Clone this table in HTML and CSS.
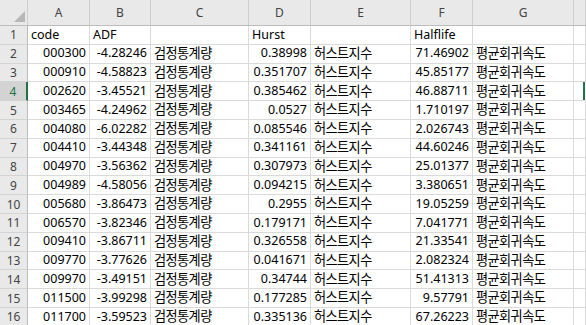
FILE: index.html
```html
<!DOCTYPE html>
<html lang="ko">
<head>
<meta charset="utf-8">
<title>Sheet1</title>
<link rel="stylesheet" href="styles.css">
</head>
<body>
<div class="sheet">
  <div class="row head">
    <div class="corner"><svg width="28" height="25" viewBox="0 0 28 25"><polygon points="14,22 25,22 25,11" fill="#b7b7b7"/></svg></div>
    <div class="col">A</div><div class="col">B</div><div class="col">C</div><div class="col">D</div><div class="col">E</div><div class="col">F</div><div class="col">G</div><div class="col"></div>
  </div>
  <div class="row"><div class="rh">1</div><div class="c">code</div><div class="c">ADF</div><div class="c"></div><div class="c">Hurst</div><div class="c"></div><div class="c">Halflife</div><div class="c"></div><div class="c"></div></div>
  <div class="row"><div class="rh">2</div><div class="c n">000300</div><div class="c n">-4.28246</div><div class="c">검정통계량</div><div class="c n">0.38998</div><div class="c">허스트지수</div><div class="c n">71.46902</div><div class="c">평균회귀속도</div><div class="c"></div></div>
  <div class="row"><div class="rh">3</div><div class="c n">000910</div><div class="c n">-4.58823</div><div class="c">검정통계량</div><div class="c n">0.351707</div><div class="c">허스트지수</div><div class="c n">45.85177</div><div class="c">평균회귀속도</div><div class="c"></div></div>
  <div class="row"><div class="rh sel">4</div><div class="c n">002620</div><div class="c n">-3.45521</div><div class="c">검정통계량</div><div class="c n">0.385462</div><div class="c">허스트지수</div><div class="c n">46.88711</div><div class="c">평균회귀속도</div><div class="c cur"><span class="mark"></span></div></div>
  <div class="row"><div class="rh">5</div><div class="c n">003465</div><div class="c n">-4.24962</div><div class="c">검정통계량</div><div class="c n">0.0527</div><div class="c">허스트지수</div><div class="c n">1.710197</div><div class="c">평균회귀속도</div><div class="c"></div></div>
  <div class="row"><div class="rh">6</div><div class="c n">004080</div><div class="c n">-6.02282</div><div class="c">검정통계량</div><div class="c n">0.085546</div><div class="c">허스트지수</div><div class="c n">2.026743</div><div class="c">평균회귀속도</div><div class="c"></div></div>
  <div class="row"><div class="rh">7</div><div class="c n">004410</div><div class="c n">-3.44348</div><div class="c">검정통계량</div><div class="c n">0.341161</div><div class="c">허스트지수</div><div class="c n">44.60246</div><div class="c">평균회귀속도</div><div class="c"></div></div>
  <div class="row"><div class="rh">8</div><div class="c n">004970</div><div class="c n">-3.56362</div><div class="c">검정통계량</div><div class="c n">0.307973</div><div class="c">허스트지수</div><div class="c n">25.01377</div><div class="c">평균회귀속도</div><div class="c"></div></div>
  <div class="row"><div class="rh">9</div><div class="c n">004989</div><div class="c n">-4.58056</div><div class="c">검정통계량</div><div class="c n">0.094215</div><div class="c">허스트지수</div><div class="c n">3.380651</div><div class="c">평균회귀속도</div><div class="c"></div></div>
  <div class="row"><div class="rh">10</div><div class="c n">005680</div><div class="c n">-3.86473</div><div class="c">검정통계량</div><div class="c n">0.2955</div><div class="c">허스트지수</div><div class="c n">19.05259</div><div class="c">평균회귀속도</div><div class="c"></div></div>
  <div class="row"><div class="rh">11</div><div class="c n">006570</div><div class="c n">-3.82346</div><div class="c">검정통계량</div><div class="c n">0.179171</div><div class="c">허스트지수</div><div class="c n">7.041771</div><div class="c">평균회귀속도</div><div class="c"></div></div>
  <div class="row"><div class="rh">12</div><div class="c n">009410</div><div class="c n">-3.86711</div><div class="c">검정통계량</div><div class="c n">0.326558</div><div class="c">허스트지수</div><div class="c n">21.33541</div><div class="c">평균회귀속도</div><div class="c"></div></div>
  <div class="row"><div class="rh">13</div><div class="c n">009770</div><div class="c n">-3.77626</div><div class="c">검정통계량</div><div class="c n">0.041671</div><div class="c">허스트지수</div><div class="c n">2.082324</div><div class="c">평균회귀속도</div><div class="c"></div></div>
  <div class="row"><div class="rh">14</div><div class="c n">009970</div><div class="c n">-3.49151</div><div class="c">검정통계량</div><div class="c n">0.34744</div><div class="c">허스트지수</div><div class="c n">51.41313</div><div class="c">평균회귀속도</div><div class="c"></div></div>
  <div class="row"><div class="rh">15</div><div class="c n">011500</div><div class="c n">-3.99298</div><div class="c">검정통계량</div><div class="c n">0.177285</div><div class="c">허스트지수</div><div class="c n">9.57791</div><div class="c">평균회귀속도</div><div class="c"></div></div>
  <div class="row"><div class="rh">16</div><div class="c n">011700</div><div class="c n">-3.59523</div><div class="c">검정통계량</div><div class="c n">0.335136</div><div class="c">허스트지수</div><div class="c n">67.26223</div><div class="c">평균회귀속도</div><div class="c"></div></div>
</div>
</body>
</html>
```
FILE: styles.css
```css
* { box-sizing: border-box; }

html, body {
  margin: 0;
  padding: 0;
  background: #ffffff;
  overflow: hidden;
}

.sheet {
  width: 586px;
  font-family: "Noto Sans", "Noto Sans CJK KR", sans-serif;
  font-size: 12.5px;
  color: #000;
}

.row {
  display: grid;
  grid-template-columns: 28px 62px 61px 98px 62px 100px 62px 101px 1fr;
  height: 18.8px;
}

.row.head {
  height: 26px;
  background: #e9e9e9;
  border-bottom: 1px solid #bcbcbc;
}

.corner {
  border-right: 1px solid #cfcfcf;
  line-height: 0;
}

.col {
  border-right: 1px solid #cfcfcf;
  display: flex;
  align-items: center;
  justify-content: center;
  color: #444;
  font-size: 12px;
}

.rh {
  background: #e9e9e9;
  border-right: 1px solid #bcbcbc;
  border-bottom: 1px solid #d4d4d4;
  display: flex;
  align-items: center;
  justify-content: center;
  color: #444;
  font-size: 12px;
}

.rh.sel {
  background: #d3d3d3;
  color: #217346;
  border-right: 2px solid #217346;
}

.c {
  border-right: 1px solid #dadada;
  border-bottom: 1px solid #dadada;
  display: flex;
  align-items: center;
  padding: 0 3px;
  white-space: nowrap;
  overflow: hidden;
  line-height: 1;
}

/* label columns C, E and G hold Hangul text */
.row:not(.head) > .c:nth-child(4),
.row:not(.head) > .c:nth-child(6),
.row:not(.head) > .c:nth-child(8) {
  font-size: 13.2px;
  letter-spacing: -0.6px;
}

.c.n {
  justify-content: flex-end;
  padding: 0 3px 0 0;
}

.c.cur {
  position: relative;
  border-right: none;
  overflow: visible;
}

/* active cell edge to the right */
.mark {
  position: absolute;
  left: 9px;
  top: 0;
  width: 2px;
  height: 100%;
  background: #217346;
}
```
